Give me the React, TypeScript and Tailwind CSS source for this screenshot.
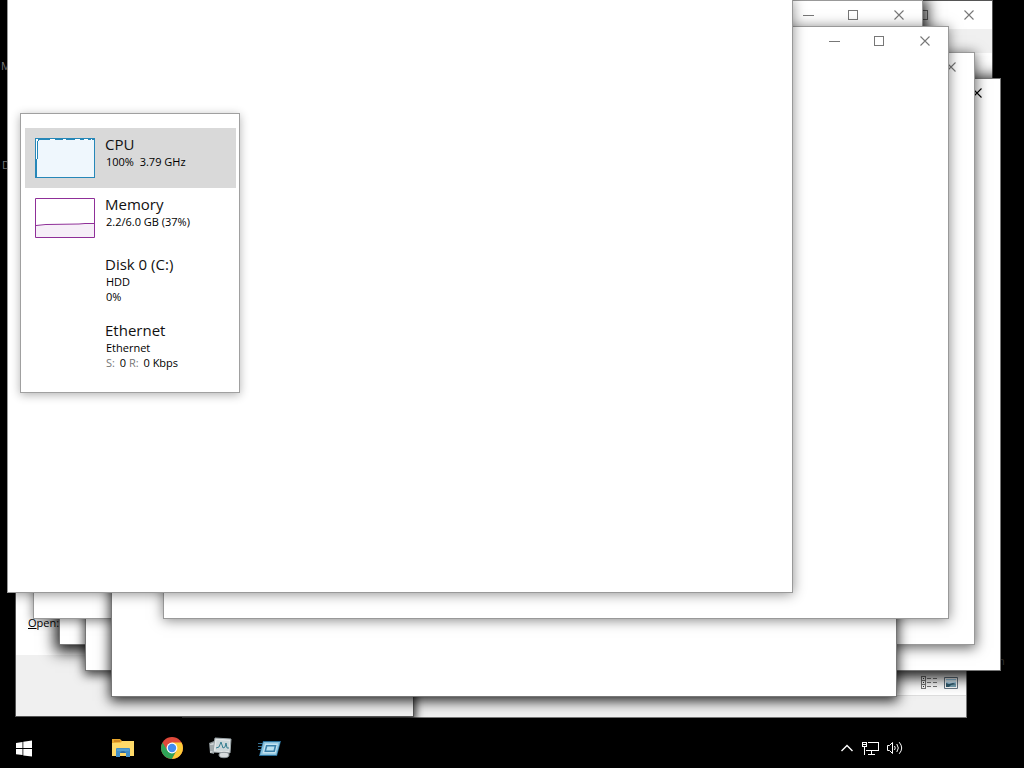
import type { ReactNode } from 'react';

const FRAME = 'absolute border bg-white';
const SHADOW = 'shadow-[0_2px_10px_rgba(0,0,0,0.5)]';
const DEEP_SHADOW = 'shadow-[0_3px_14px_4px_rgba(0,0,0,0.9)]';

function Caption({ tone = 'text-[#777]' }: { tone?: string }) {
  return (
    <div className={`flex h-7 justify-end ${tone}`}>
      <button aria-label="Minimize" className="flex w-[45px] items-center justify-center">
        <svg width="11" height="11" viewBox="0 0 11 11" shapeRendering="crispEdges">
          <path d="M0 5.5h11" stroke="currentColor" />
        </svg>
      </button>
      <button aria-label="Maximize" className="flex w-[45px] items-center justify-center">
        <svg width="11" height="11" viewBox="0 0 11 11" fill="none" shapeRendering="crispEdges">
          <path d="M.5 .5h9v9h-9z" stroke="currentColor" />
        </svg>
      </button>
      <button aria-label="Close" className="flex w-[46px] items-center justify-center">
        <svg width="11" height="11" viewBox="0 0 11 11">
          <path d="M.5 .5l9 9M9.5 .5l-9 9" stroke="currentColor" strokeWidth="1.1" />
        </svg>
      </button>
    </div>
  );
}

function Win({ place, shadow = SHADOW, edge = 'border-[#999]', children }: {
  place: string;
  shadow?: string;
  edge?: string;
  children?: ReactNode;
}) {
  return <section className={`${FRAME} ${place} ${shadow} ${edge}`}>{children}</section>;
}

function Resource({ title, graph, selected, tall, children }: {
  title: string;
  graph?: ReactNode;
  selected?: boolean;
  tall?: boolean;
  children: ReactNode;
}) {
  return (
    <li className={`${selected ? 'bg-[#d9d9d9]' : ''} ${tall ? 'h-[66px]' : 'h-[60px]'}`}>
      <button className="flex w-full items-start gap-[10px] pt-[7px] pl-[10px] text-left">
        <span className="w-[60px] shrink-0 pt-[3px]">{graph}</span>
        <span className="flex flex-col gap-px">
          <span className="text-[15px] leading-[18px] text-[#111]">{title}</span>
          <span className="pl-px text-[11px] leading-[15px] whitespace-pre">{children}</span>
        </span>
      </button>
    </li>
  );
}

function CpuGraph() {
  return (
    <svg width="60" height="40" viewBox="0 0 60 40" aria-label="CPU usage" shapeRendering="crispEdges">
      <path d="M.5 .5h59v39H.5z" fill="#fff" stroke="#2687b8" />
      <path d="M2 39L3 2h56v37z" fill="#eff7fd" />
      <path d="M1.500 39L2.500 4l1-2.500h7l1 0h3l1-1h4l1 1h7l1-1h2l1 1h8l1-1h4l1 1h3l1-1h3l2 1 2-1 2 1h2" fill="none" stroke="#2687b8" />
    </svg>
  );
}

function MemoryGraph() {
  return (
    <svg width="60" height="40" viewBox="0 0 60 40" aria-label="Memory usage">
      <path d="M.5 .5h59v39H.5z" fill="#fff" />
      <path d="M1 27.500h10v-1h34v-1h14V39H1z" fill="#f6eff8" />
      <path d="M1 27.500l10-1 33-.5 6-.5h9" fill="none" stroke="#8f2f98" />
      <path d="M.5 .5h59v39H.5z" fill="none" stroke="#8f2f98" />
    </svg>
  );
}

function TaskManager() {
  return (
    <section className="absolute top-[113px] left-5 w-[220px] border border-[#a0a0a0] bg-white pt-[14px] pr-[3px] pb-3 pl-1 text-black shadow-[0_2px_9px_rgba(0,0,0,0.3)]">
      <ul>
        <Resource title="CPU" selected graph={<CpuGraph />}>100%  3.79 GHz</Resource>
        <Resource title="Memory" graph={<MemoryGraph />}>2.2/6.0 GB (37%)</Resource>
        <Resource title="Disk 0 (C:)" tall>{'HDD\n0%'}</Resource>
        <Resource title="Ethernet" tall>
          {'Ethernet\n'}
          <span className="mr-[2px] text-[#777]">S: </span>0 <span className="mr-[2px] text-[#777]">R: </span>0 Kbps
        </Resource>
      </ul>
    </section>
  );
}

function ViewIcons() {
  return (
    <div className="flex items-center justify-end gap-[6px] pr-2">
      <button aria-label="Details view">
        <svg width="17" height="13" viewBox="0 0 17 13" fill="none" stroke="#777" shapeRendering="crispEdges">
          <path d="M.5 .5h4v12h-4zM.5 4.500h4M.5 8.500h4" />
          <path d="M2 2.500h1M2 6.500h1M2 10.500h1" stroke="#333" />
          <path d="M6 2.500h4M12 2.500h4M6 6.500h4M12 6.500h4M6 10.500h4M12 10.500h4" />
        </svg>
      </button>
      <button aria-label="Large icons view">
        <svg width="14" height="12" viewBox="0 0 14 12">
          <path d="M.5 .5h13v11H.5z" fill="#fff" stroke="#697986" />
          <path d="M2 2h10v8H2z" fill="#9ccbe9" />
          <path d="M2 3h10v2l-5 1-5-1z" fill="#d8edf7" />
          <path d="M2 6l3 1 4-1 3 1v3H2z" fill="#2f596b" />
          <path d="M7 8l5-1v3H5z" fill="#79a5b6" />
        </svg>
      </button>
    </div>
  );
}

function StartIcon() {
  return (
    <svg width="16" height="17" viewBox="0 0 16 17" fill="#fff">
      <path d="M0 2.900l6.500-1v6.100H0zM7.300 1.700L16 .4V8H7.300zM0 8.900h6.500V15L0 14.200zM7.300 8.900H16v7.700l-8.700-1.200z" />
    </svg>
  );
}

function FolderIcon() {
  return (
    <svg width="22" height="20" viewBox="0 0 22 20">
      <path d="M0 1h8l2 2h11v15H0z" fill="#e9a72c" />
      <path d="M0 5l9-.5L10 3h12v15H0z" fill="#ffda69" />
      <path d="M2 3h6" stroke="#b96a16" />
      <path d="M4 11q0-1 1-1h12q1 0 1 1v8h-4v-4H8v4H4z" fill="#418fc8" />
      <path d="M8 15q1-2 3-2t3 2z" fill="#316ca0" />
      <path d="M5 12h12" stroke="#69afd9" />
    </svg>
  );
}

function ChromeIcon() {
  return (
    <svg width="22" height="22" viewBox="0 0 22 22">
      <circle cx="11" cy="11" r="11" fill="#e0493b" />
      <path d="M1.500 5.500A11 11 0 0 0 11 22l4.600-8.400L11 11 6.500 13.500z" fill="#2fa457" />
      <path d="M20.500 5.500H11v5.500l4.600 2.600L11 22A11 11 0 0 0 20.500 5.500z" fill="#fdcc38" />
      <circle cx="11" cy="11" r="5.400" fill="#fff" />
      <circle cx="11" cy="11" r="4.200" fill="#438cf0" />
    </svg>
  );
}

function MonitorIcon() {
  return (
    <svg width="23" height="22" viewBox="0 0 23 22">
      <path d="M0 6l5-2v13l-4-1z" fill="#8b9396" />
      <path d="M1 7l5-2v10l-5 1z" fill="#cbd1d3" />
      <path d="M2 8v6M4 8v6" stroke="#7c8588" />
      <path d="M6 1l16 1-1 14-17-1z" fill="#e2e6e7" stroke="#9aa4a8" />
      <path d="M7.500 3l13 1-1 10-13-.5z" fill="#cdd7da" />
      <path d="M7 11l3-1 2-5 2 6 2-1 1-4 1 5h2" fill="none" stroke="#367e91" />
      <path d="M12 15h4v3h-4z" fill="#a6afb3" />
      <ellipse cx="15" cy="18" rx="5" ry="2.700" fill="#d9dddf" stroke="#8f989c" />
    </svg>
  );
}

function RunIcon() {
  return (
    <svg width="23" height="17" viewBox="0 0 23 17">
      <path d="M5 1h18l-4 15H1z" fill="#286d98" />
      <path d="M5.500 2h16.500l-3.500 13H2z" fill="#86c0dc" />
      <path d="M7 3.500h13l-2.500 10H4.500z" fill="#c3e2f0" />
      <path d="M8 5h10.500l-1.700 7H6.300z" fill="#397fa9" />
      <path d="M9.300 6.500h7.200l-1 4H8.200z" fill="#b9dfee" />
      <path d="M0 3.500h5M0 6.500h4M0 9.500h3" stroke="#356f90" />
    </svg>
  );
}

function Taskbar() {
  return (
    <nav className="flex h-10 shrink-0 items-center justify-between bg-black pr-[120px]" aria-label="Taskbar">
      <div className="flex items-center">
        <button aria-label="Start" className="flex w-12 justify-center"><StartIcon /></button>
        <div className="ml-[50px] flex items-center">
          <button aria-label="File Explorer" className="flex w-[49px] justify-center"><FolderIcon /></button>
          <button aria-label="Chrome" className="flex w-[49px] justify-center"><ChromeIcon /></button>
          <button aria-label="Task Manager" className="flex w-[49px] justify-center"><MonitorIcon /></button>
          <button aria-label="Run" className="flex w-[49px] justify-center"><RunIcon /></button>
        </div>
      </div>
      <div className="flex items-center gap-2">
        <button aria-label="Show hidden icons">
          <svg width="14" height="8" viewBox="0 0 14 8" fill="none" stroke="#fff" strokeWidth="1.400">
            <path d="M1.500 7L7 1.500 12.500 7" />
          </svg>
        </button>
        <button aria-label="Network">
          <svg width="17" height="14" viewBox="0 0 17 14" fill="none" stroke="#fff" shapeRendering="crispEdges">
            <path d="M6 1.500h10.500v8H3.500M9.500 10v3M6 13.500h7M.5 1.500h4v4h-4zM2.500 6v7.500" />
            <path d="M1 3.500h3" />
          </svg>
        </button>
        <button aria-label="Volume">
          <svg width="17" height="14" viewBox="0 0 17 14" fill="none" stroke="#fff">
            <path d="M.5 4.500h2l3-3v11l-3-3h-2z" />
            <path d="M7.500 5q1.500 2 0 4M9.800 3q3 4 0 8M12.200 1.200q5 5.800 0 11.600" />
          </svg>
        </button>
      </div>
    </nav>
  );
}

export default function App() {
  return (
    <div className="flex h-screen flex-col overflow-hidden bg-black font-['Open_Sans','Noto_Sans',sans-serif] text-[11px]">
      <main className="relative flex-1 overflow-hidden">
        <span className="absolute top-[58px] left-[1px] text-[#888]">M</span>
        <span className="absolute top-[157px] left-[2px] text-[#888]">D</span>
        <span className="absolute top-[653px] left-[998px] text-[#666]">n</span>

        <Win place="top-0 left-[208px] h-[592px] w-[785px]" shadow="shadow-none" edge="border-[#555]">
          <Caption />
          <div className="h-6 bg-[#f0f0f0]" />
        </Win>
        <Win place="top-[126px] left-[182px] flex h-[592px] w-[785px] flex-col justify-end" shadow="shadow-none" edge="border-[#777]">
          <ViewIcons />
          <div className="mt-[6px] h-[22px] border-t border-[#ddd] bg-[#f0f0f0]" />
        </Win>
        <Win place="top-[520px] left-[15px] flex h-[197px] w-[399px] flex-col justify-between" shadow="shadow-[0_2px_8px_2px_rgba(0,0,0,0.8)]" edge="border-[#555]">
          <label className="pt-[94px] pl-3 leading-4 text-black"><u>O</u>pen:</label>
          <div className="h-[61px] bg-[#f0f0f0]" />
        </Win>

        <Win place="top-[78px] left-[216px] h-[593px] w-[785px]" shadow={DEEP_SHADOW} edge="border-[#777]"><Caption tone="text-black" /></Win>
        <Win place="top-[52px] left-[59px] h-[593px] w-[785px]" shadow={DEEP_SHADOW} edge="border-[#777]" />
        <Win place="top-[78px] left-[85px] h-[593px] w-[785px]" shadow="shadow-[0_3px_10px_1px_rgba(0,0,0,0.75)]" edge="border-[#777]" />
        <Win place="top-[26px] left-[33px] h-[593px] w-[785px]" />
        <Win place="top-0 left-[138px] h-[593px] w-[785px]" shadow={DEEP_SHADOW}><Caption /></Win>
        <Win place="top-[52px] left-[190px] h-[593px] w-[785px]" shadow="shadow-[0_2px_12px_1px_rgba(0,0,0,0.6)]"><Caption /></Win>
        <Win place="top-[104px] left-[111px] h-[593px] w-[786px]" shadow="shadow-[0_3px_12px_1px_rgba(0,0,0,0.85)]" edge="border-[#777]" />
        <Win place="top-[26px] left-[163px] h-[593px] w-[786px]" shadow="shadow-[0_1px_12px_rgba(0,0,0,0.5)]"><Caption /></Win>
        <Win place="-top-px left-[7px] h-[594px] w-[786px]" shadow="shadow-[0_1px_12px_rgba(0,0,0,0.45)]" />
        <TaskManager />
      </main>
      <Taskbar />
    </div>
  );
}
